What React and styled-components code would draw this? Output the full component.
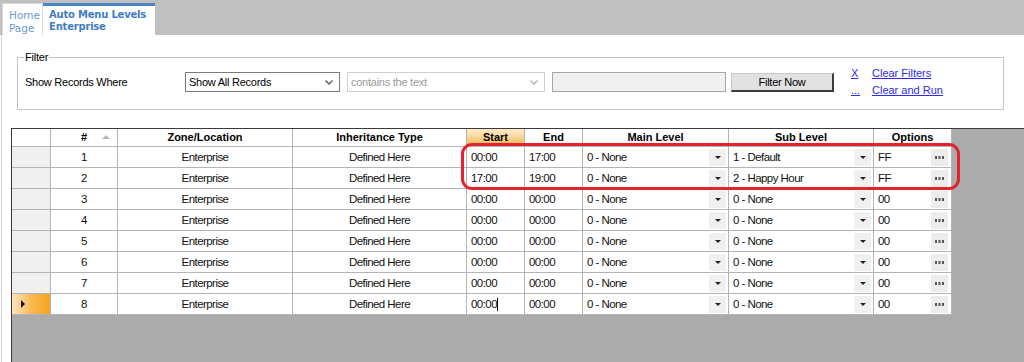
import React from 'react';
import styled, { createGlobalStyle, css } from 'styled-components';

const GlobalStyle = createGlobalStyle`
  html, body {
    margin: 0;
    padding: 0;
    background: #fff;
  }
  body {
    font-family: "Liberation Sans", Arial, sans-serif;
    font-size: 11px;
    color: #000;
  }
`;

const Page = styled.div`
  width: 1024px;
  height: 362px;
  display: flex;
  flex-direction: column;
  overflow: hidden;
`;

/* ---------- tabs ---------- */

const TabStrip = styled.div`
  flex: none;
  height: 35px;
  box-sizing: border-box;
  background: #c0c0c0;
  display: flex;
  align-items: flex-end;
  padding-left: 2px;
`;

const Tab = styled.div`
  box-sizing: border-box;
  width: ${p => p.$w}px;
  height: 32px;
  background: #fff;
  font-family: "DejaVu Sans", Verdana, sans-serif;
  font-size: 10.5px;
  line-height: 13px;
  padding: 5px 0 0 6px;
  color: #6c9ad0;
  white-space: nowrap;
  border: 1px solid #d8d8d8;
  border-bottom: none;

  ${p => p.$active && css`
    border: none;
    border-top: 3px solid #4a86c6;
    padding: 3px 0 0 6px;
    line-height: 12px;
    font-size: 10px;
    letter-spacing: -0.2px;
    font-weight: bold;
    color: #3f7cc2;
  `}
`;

/* ---------- body ---------- */

const Body = styled.div`
  flex: 1;
  min-height: 0;
  display: flex;
  flex-direction: column;
  margin-left: 1px;
  border-left: 1px solid #d4d4d4;
`;

const FilterBox = styled.fieldset`
  flex: none;
  box-sizing: border-box;
  width: 987px;
  margin: 15px 0 0 15px;
  padding: 0 0 17px 7px;
  border: 1px solid #c4c4c4;
  min-inline-size: 0;
`;

const Legend = styled.legend`
  padding: 0 1px;
  margin-left: -1px;
  font-size: 11px;
  line-height: 14px;
  letter-spacing: -0.2px;
`;

const FilterRow = styled.div`
  margin-top: 8px;
  height: 20px;
  display: flex;
  align-items: center;
`;

const FieldLabel = styled.span`
  width: 160px;
  letter-spacing: -0.25px;
`;

const Combo = styled.div`
  box-sizing: border-box;
  width: ${p => p.$w}px;
  height: 20px;
  margin-left: ${p => p.$gap || 0}px;
  display: flex;
  align-items: center;
  justify-content: space-between;
  padding: 0 6px 0 3px;
  background: #fff;
  border: 1px solid ${p => (p.$disabled ? '#cfcfcf' : '#7a7a7a')};
  color: ${p => (p.$disabled ? '#9a9a9a' : '#000')};
  letter-spacing: -0.25px;
`;

const TextBox = styled.div`
  box-sizing: border-box;
  width: 174px;
  height: 20px;
  margin-left: 7px;
  background: #f0f0f0;
  border: 1px solid #a6a6a6;
`;

const PushButton = styled.div`
  box-sizing: border-box;
  width: 103px;
  height: 19px;
  margin-left: 5px;
  display: flex;
  align-items: center;
  justify-content: center;
  background: #e1e1e1;
  border-top: 1px solid #c8c8c8;
  border-left: 1px solid #c8c8c8;
  border-right: 2px solid #3c3c3c;
  border-bottom: 2px solid #3c3c3c;
  letter-spacing: -0.25px;
`;

const Links = styled.div`
  margin-left: 17px;
  display: grid;
  grid-template-columns: 21px auto;
  line-height: 17px;
`;

const Link = styled.a`
  color: #2b2bea;
  text-decoration: underline;
  cursor: pointer;
`;

const Chevron = ({ color }) => (
  <svg width="8" height="5" viewBox="0 0 8 5">
    <path d="M0.5 0.5 L4 4 L7.5 0.5" fill="none" stroke={color} strokeWidth="1.3" />
  </svg>
);

/* ---------- grid ---------- */

const GridArea = styled.div`
  flex: 1;
  position: relative;
  margin: 18px 0 0 9px;
  background: #ababab;
  border-top: 1px solid #3a3a3a;
  border-left: 1px solid #3a3a3a;
`;

const Table = styled.table`
  border-collapse: separate;
  border-spacing: 0;
  table-layout: fixed;
  width: 940px;
  background: #fff;
`;

const Col = styled.col`
  width: ${p => p.$w}px;
`;

const HeadCell = styled.th`
  position: relative;
  padding: 0;
  height: 17px;
  border-right: 1px solid #b4b4b4;
  border-bottom: 1px solid #b4b4b4;
  background: ${p => (p.$hot
    ? 'linear-gradient(to bottom, #fdeccc 0%, #fbd79a 45%, #f6b54e 100%)'
    : '#fff')};
  font-weight: bold;
  font-size: 11px;
  text-align: center;
  line-height: 17px;
  white-space: nowrap;
`;

const SortArrow = styled.span`
  position: absolute;
  right: 7px;
  top: 6px;
  width: 0;
  height: 0;
  border-left: 4px solid transparent;
  border-right: 4px solid transparent;
  border-bottom: 4px solid #b8b8b8;
`;

const RowHead = styled.td`
  padding: 0;
  border-right: 1px solid #b4b4b4;
  border-bottom: 1px solid #b4b4b4;
  background: ${p => (p.$current
    ? 'linear-gradient(to right, #fce4c2 0%, #f9b64c 55%, #f7a31c 100%)'
    : '#f0f0f0')};
`;

const Cell = styled.td`
  padding: 0;
  border-right: 1px solid #b4b4b4;
  border-bottom: 1px solid #b4b4b4;
`;

const CellBox = styled.div`
  height: 20px;
  display: flex;
  align-items: center;
  justify-content: ${p => (p.$center ? 'center' : 'flex-start')};
  padding-left: ${p => (p.$center ? 0 : 4)}px;
  color: #111;
  font-size: 11.5px;
  letter-spacing: -0.55px;
  white-space: nowrap;
  overflow: hidden;
`;

const CellText = styled.span`
  flex: ${p => (p.$grow ? 1 : 'none')};
`;

const Pointer = styled.span`
  margin-left: 5px;
  width: 0;
  height: 0;
  border-top: 4px solid transparent;
  border-bottom: 4px solid transparent;
  border-left: 4px solid #111;
`;

const Caret = styled.span`
  width: 1px;
  height: 13px;
  background: #000;
`;

const DropButton = styled.span`
  flex: none;
  width: 17px;
  height: 17px;
  margin-right: 2px;
  display: flex;
  align-items: center;
  justify-content: center;
  background: #f0f0f0;

  &::after {
    content: '';
    width: 0;
    height: 0;
    border-left: 3px solid transparent;
    border-right: 3px solid transparent;
    border-top: 3px solid #222;
  }
`;

const EllipsisButton = styled.span`
  flex: none;
  width: 17px;
  height: 17px;
  margin-right: 3px;
  display: flex;
  align-items: center;
  justify-content: center;
  background: #ececec;
`;

const Dots = () => (
  <svg width="9" height="3" viewBox="0 0 9 3">
    <rect x="0" y="0" width="2" height="3" fill="#555" />
    <rect x="3.5" y="0" width="2" height="3" fill="#555" />
    <rect x="7" y="0" width="2" height="3" fill="#555" />
  </svg>
);

const Highlight = styled.div`
  position: absolute;
  left: 449px;
  top: 14px;
  width: 499px;
  height: 47px;
  box-sizing: border-box;
  border: 3px solid #e4222c;
  border-radius: 11px;
  pointer-events: none;
`;

const columns = [
  { key: 'rh', title: '', w: 39 },
  { key: 'n', title: '#', w: 67, sort: true },
  { key: 'zone', title: 'Zone/Location', w: 175 },
  { key: 'inh', title: 'Inheritance Type', w: 174 },
  { key: 'start', title: 'Start', w: 58, hot: true },
  { key: 'end', title: 'End', w: 58 },
  { key: 'main', title: 'Main Level', w: 146 },
  { key: 'sub', title: 'Sub Level', w: 145 },
  { key: 'opt', title: 'Options', w: 78 },
];

const rows = [
  { n: 1, start: '00:00', end: '17:00', main: '0 - None', sub: '1 - Default', opt: 'FF' },
  { n: 2, start: '17:00', end: '19:00', main: '0 - None', sub: '2 - Happy Hour', opt: 'FF' },
  ...[3, 4, 5, 6, 7, 8].map(n => ({
    n, start: '00:00', end: '00:00', main: '0 - None', sub: '0 - None', opt: '00',
  })),
];

const ComboCell = ({ value }) => (
  <Cell>
    <CellBox>
      <CellText $grow>{value}</CellText>
      <DropButton />
    </CellBox>
  </Cell>
);

export default function App() {
  return (
    <Page>
      <GlobalStyle />
      <TabStrip>
        <Tab $w={41}>Home<br />Page</Tab>
        <Tab $w={112} $active>Auto Menu Levels<br />Enterprise</Tab>
      </TabStrip>

      <Body>
        <FilterBox>
          <Legend>Filter</Legend>
          <FilterRow>
            <FieldLabel>Show Records Where</FieldLabel>
            <Combo $w={155}>
              <span>Show All Records</span>
              <Chevron color="#555" />
            </Combo>
            <Combo $w={198} $gap={7} $disabled>
              <span>contains the text</span>
              <Chevron color="#b0b0b0" />
            </Combo>
            <TextBox />
            <PushButton>Filter Now</PushButton>
            <Links>
              <Link>X</Link>
              <Link>Clear Filters</Link>
              <Link>...</Link>
              <Link>Clear and Run</Link>
            </Links>
          </FilterRow>
        </FilterBox>

        <GridArea>
          <Table>
            <colgroup>
              {columns.map(c => <Col key={c.key} $w={c.w} />)}
            </colgroup>
            <thead>
              <tr>
                {columns.map(c => (
                  <HeadCell key={c.key} $hot={c.hot}>
                    {c.title}
                    {c.sort && <SortArrow />}
                  </HeadCell>
                ))}
              </tr>
            </thead>
            <tbody>
              {rows.map(r => {
                const current = r.n === 8;
                return (
                  <tr key={r.n}>
                    <RowHead $current={current}>
                      <CellBox>{current && <Pointer />}</CellBox>
                    </RowHead>
                    <Cell><CellBox $center>{r.n}</CellBox></Cell>
                    <Cell><CellBox $center>Enterprise</CellBox></Cell>
                    <Cell><CellBox $center>Defined Here</CellBox></Cell>
                    <Cell>
                      <CellBox>
                        <CellText>{r.start}</CellText>
                        {current && <Caret />}
                      </CellBox>
                    </Cell>
                    <Cell><CellBox>{r.end}</CellBox></Cell>
                    <ComboCell value={r.main} />
                    <ComboCell value={r.sub} />
                    <Cell>
                      <CellBox>
                        <CellText $grow>{r.opt}</CellText>
                        <EllipsisButton><Dots /></EllipsisButton>
                      </CellBox>
                    </Cell>
                  </tr>
                );
              })}
            </tbody>
          </Table>
          <Highlight />
        </GridArea>
      </Body>
    </Page>
  );
}
